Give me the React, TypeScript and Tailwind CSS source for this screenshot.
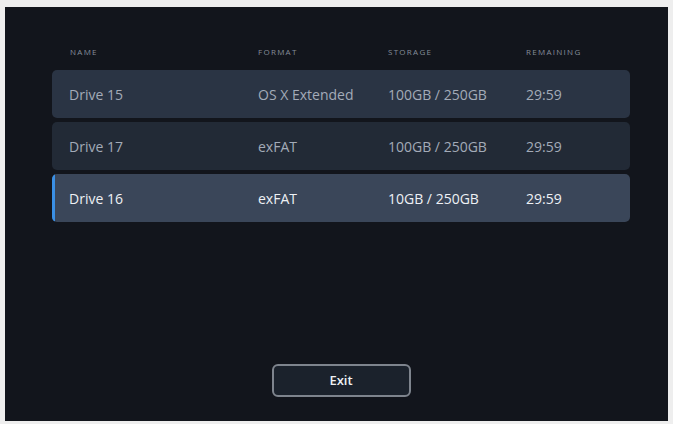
import React from "react";

interface Drive {
    name: string
    format: string
    storage: string
    remaining: string
    tone: "light" | "dark" | "selected"
}

const drives: Drive[] = [
    { name: "Drive 15", format: "OS X Extended", storage: "100GB / 250GB", remaining: "29:59", tone: "light" },
    { name: "Drive 17", format: "exFAT", storage: "100GB / 250GB", remaining: "29:59", tone: "dark" },
    { name: "Drive 16", format: "exFAT", storage: "10GB / 250GB", remaining: "29:59", tone: "selected" },
];

const rowTone = {
    light: "bg-[#2a3444] text-[#a3abb8]",
    dark: "bg-[#222a36] text-[#a3abb8]",
    selected: "bg-[#3a4659] text-[#eef1f5] font-medium",
};

const DriveRow: React.FC<{ drive: Drive }> = ({ drive }) => {
    return (
        <div className={`relative flex items-center h-[48px] rounded-[5px] overflow-hidden text-[14px] ${rowTone[drive.tone]}`}>
            {drive.tone === "selected" && <div className="absolute left-0 top-0 bottom-0 w-[3px] bg-[#3a8fe4]" />}
            <div className="w-[206px] pl-[17px]">{drive.name}</div>
            <div className="w-[130px]">{drive.format}</div>
            <div className="w-[138px]">{drive.storage}</div>
            <div>{drive.remaining}</div>
        </div>
    )
}

export default function App() {
    return (
        <div className="w-[673px] h-[424px] bg-[#eeeeee] pt-[7px] pl-[5px] pr-[5px] pb-[3px]" style={{ fontFamily: '"Open Sans", "Noto Sans", sans-serif' }}>
            <div className="h-full bg-[#12151c] flex flex-col pl-[47px] pr-[38px] pt-[38px] pb-[24px]">
                {/* column headings */}
                <div className="flex h-[14px] items-center text-[8px] tracking-[0.16em] text-[#858d99] uppercase">
                    <div className="w-[206px] pl-[18px]">Name</div>
                    <div className="w-[130px]">Format</div>
                    <div className="w-[138px]">Storage</div>
                    <div>Remaining</div>
                </div>
                <div className="flex flex-col gap-[4px] mt-[11px]">
                    {drives.map((drive) => (
                        <DriveRow key={drive.name} drive={drive} />
                    ))}
                </div>
                <div className="flex-1" />
                <div className="flex justify-center">
                    <button className="w-[139px] h-[33px] rounded-[6px] border-2 border-[#7e848d] bg-[#1b222c] text-[#eef0f3] text-[13px] font-semibold">
                        Exit
                    </button>
                </div>
            </div>
        </div>
    )
}
